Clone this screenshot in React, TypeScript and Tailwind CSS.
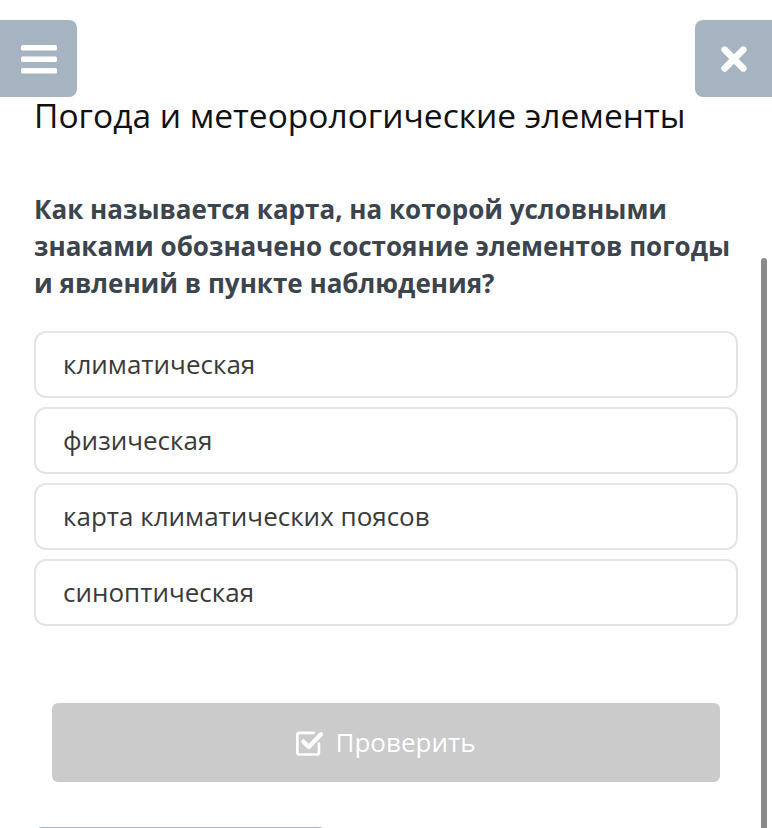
const options = ['климатическая', 'физическая', 'карта климатических поясов', 'синоптическая'];

function CheckSquare() {
    return (
        <svg viewBox="2 3 20 19" className="w-[27px] h-[26px]" fill="none" stroke="white" strokeWidth="2" strokeLinecap="round" strokeLinejoin="round">
            <path d="M19 13v6.5a1.5 1.5 0 0 1-1.5 1.5h-13A1.5 1.5 0 0 1 3 19.5v-13A1.5 1.5 0 0 1 4.5 5H15" />
            <path d="M7.5 11.5l4 4L20.5 6" strokeWidth="3.2" />
        </svg>
    );
}

export default function App() {
    return (
        <main className="relative w-[772px] h-[828px] overflow-hidden bg-white font-['Open_Sans',sans-serif]">
            {/* Top toolbar */}
            <div className="flex justify-between pt-[20px]">
                <button className="w-[77px] h-[77px] rounded-r-[8px] bg-[#a6b4c2] flex items-center justify-center">
                    <svg viewBox="0 0 36 30" className="w-[36px] h-[30px]" fill="white">
                        <rect x="0" y="1" width="36" height="5.5" rx="1.5" />
                        <rect x="0" y="12.5" width="36" height="5.5" rx="1.5" />
                        <rect x="0" y="24" width="36" height="5.5" rx="1.5" />
                    </svg>
                </button>
                <button className="w-[77px] h-[77px] rounded-l-[8px] bg-[#a6b4c2] flex items-center justify-center">
                    <svg viewBox="0 0 24 24" className="w-[32px] h-[32px]" stroke="white" strokeWidth="5" strokeLinecap="round">
                        <path d="M5 5l14 14M19 5L5 19" />
                    </svg>
                </button>
            </div>

            <div className="px-[34px]">
                <h1 className="text-[33.5px] leading-[40px] text-[#111] -mt-[2px]">Погода и метеорологические элементы</h1>

                <p className="mt-[56px] text-[26px] leading-[37px] font-bold text-[#3c444d]">
                    Как называется карта, на которой условными знаками обозначено состояние элементов погоды и явлений в пункте наблюдения?
                </p>

                <div className="mt-[29px] flex flex-col gap-[9px]">
                    {options.map((o) => (
                        <div key={o} className="h-[67px] flex items-center px-[27px] border-2 border-[#e4e4e4] rounded-[12px] text-[26px] text-[#3a3a3a]">
                            {o}
                        </div>
                    ))}
                </div>

                <button className="mt-[77px] mx-[18px] w-[668px] h-[79px] rounded-[6px] bg-[#cbcbcb] flex items-center justify-center gap-[12px] text-white text-[26px]">
                    <CheckSquare />
                    Проверить
                </button>

                <div className="mt-[45px] w-[293px] h-[20px] rounded-t-[8px] bg-[#a6b4c2]" />
            </div>

            {/* scrollbar */}
            <div className="absolute left-[761px] top-[258px] w-[6px] h-[600px] rounded-t-[3px] bg-[#8a8a8a]" />
        </main>
    );
}
